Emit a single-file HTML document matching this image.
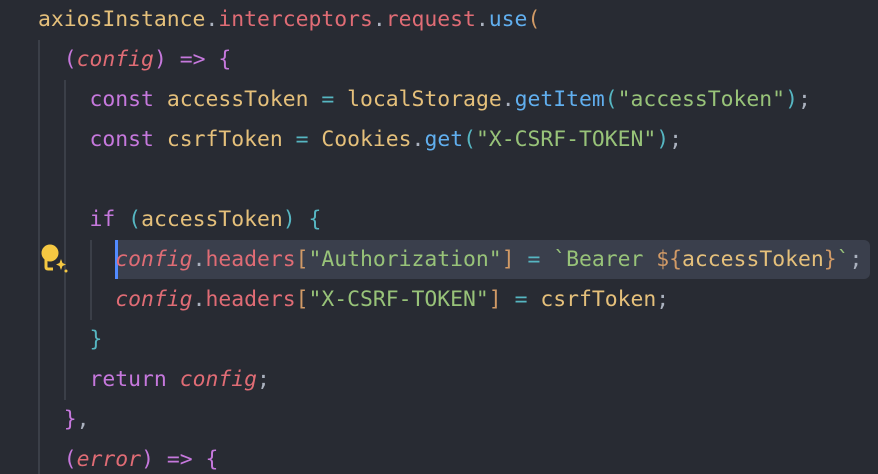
<!DOCTYPE html>
<html><head><meta charset="utf-8"><style>
html,body{margin:0;padding:0;background:#282b33;width:878px;height:474px;overflow:hidden}
.c{position:relative;width:878px;height:474px;font-family:"DejaVu Sans Mono","Liberation Mono",monospace;font-size:21.4px;color:#abb2bf}
.l{position:absolute;left:38px;height:40px;line-height:40px;white-space:pre}
.g{position:absolute;width:2px;background:#3b3f48}
.y{color:#e5c07b}.r{color:#e06c75}.p{color:#c678dd}.cy{color:#56b6c2}.gr{color:#98c379}.b{color:#61afef}.o{color:#d19a66}
i{font-style:italic}
.hl{position:absolute;left:115px;top:240px;width:755px;height:39px;background:#3a3f4c;border-radius:0 6px 6px 0}
.bar{position:absolute;left:115px;top:240px;width:3px;height:39px;background:#528bff}
</style></head><body><div class="c">
<div class="g" style="left:38px;top:40px;height:434px"></div>
<div class="g" style="left:64px;top:80px;height:320px"></div>
<div class="g" style="left:90px;top:240px;height:80px"></div>
<div class="hl"></div><div class="bar"></div>
<svg style="position:absolute;left:40px;top:242px" width="28" height="32" viewBox="0 0 28 32"><circle cx="10" cy="11" r="8.5" fill="#f5c842"/><path d="M6 17 L6 25 Q6 27 8 27 L13 27" stroke="#f5c842" stroke-width="3" fill="none"/><path d="M21 17 L22.5 21 L26 22.5 L22.5 24 L21 28 L19.5 24 L16 22.5 L19.5 21Z" fill="#f5c842"/><circle cx="26" cy="29" r="1.5" fill="#f5c842"/></svg>
<div class="l" style="top:0"><span class="y">axiosInstance</span>.<span class="r">interceptors</span>.<span class="r">request</span>.<span class="b">use</span><span class="o">(</span></div>
<div class="l" style="top:40px">  <span class="p">(</span><i class="r">config</i><span class="p">)</span> <span class="p">=&gt;</span> <span class="p">{</span></div>
<div class="l" style="top:80px">    <span class="p">const</span> <span class="y">accessToken</span> <span class="cy">=</span> <span class="y">localStorage</span>.<span class="b">getItem</span><span class="cy">(</span><span class="gr">"accessToken"</span><span class="cy">)</span>;</div>
<div class="l" style="top:120px">    <span class="p">const</span> <span class="y">csrfToken</span> <span class="cy">=</span> <span class="y">Cookies</span>.<span class="b">get</span><span class="cy">(</span><span class="gr">"X-CSRF-TOKEN"</span><span class="cy">)</span>;</div>
<div class="l" style="top:200px">    <span class="p">if</span> <span class="cy">(</span><span class="y">accessToken</span><span class="cy">)</span> <span class="cy">{</span></div>
<div class="l" style="top:240px">      <i class="r">config</i>.<span class="r">headers</span><span class="o">[</span><span class="gr">"Authorization"</span><span class="o">]</span> <span class="cy">=</span> <span class="gr">`Bearer </span><span class="o">${</span><span class="y">accessToken</span><span class="o">}</span><span class="gr">`</span>;</div>
<div class="l" style="top:280px">      <i class="r">config</i>.<span class="r">headers</span><span class="o">[</span><span class="gr">"X-CSRF-TOKEN"</span><span class="o">]</span> <span class="cy">=</span> <span class="y">csrfToken</span>;</div>
<div class="l" style="top:320px">    <span class="cy">}</span></div>
<div class="l" style="top:360px">    <span class="p">return</span> <i class="r">config</i>;</div>
<div class="l" style="top:400px">  <span class="p">}</span>,</div>
<div class="l" style="top:440px">  <span class="p">(</span><i class="r">error</i><span class="p">)</span> <span class="p">=&gt;</span> <span class="p">{</span></div>
</div></body></html>
